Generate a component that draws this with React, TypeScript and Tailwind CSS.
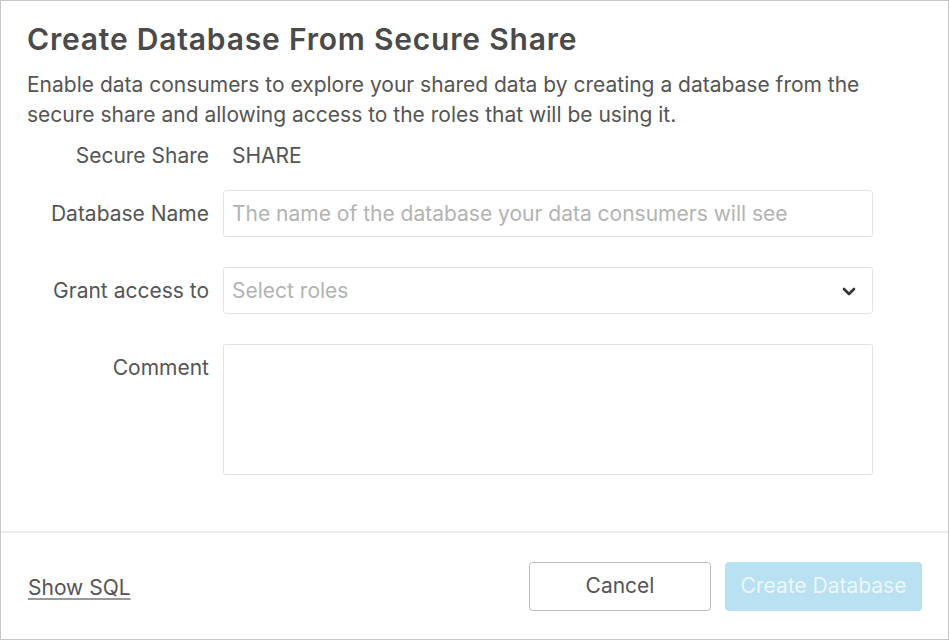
import React from 'react';

const labelCls = "text-right text-[21px] text-[#555]";
const fieldCls =
  "w-full rounded-[3px] border border-[#e3e3e3] bg-white px-[8px] text-[21px] text-[#444] placeholder:text-[#b3b3b3] outline-none";

export default function App() {
  return (
    <div
      className="flex h-[640px] w-[949px] flex-col border border-[#c8c8c8] bg-white"
      style={{ fontFamily: 'Inter, "Noto Sans", sans-serif' }}
    >
      {/* header */}
      <div className="px-[26px] pt-[20px]">
        <h1 className="text-[30px] font-semibold leading-[36px] tracking-[0.8px] text-[#4a4a4a]">
          Create Database From Secure Share
        </h1>
        <p className="mt-[13px] text-[21px] leading-[30px] text-[#555]">
          Enable data consumers to explore your shared data by creating a database from the
          <br />
          secure share and allowing access to the roles that will be using it.
        </p>
      </div>

      {/* form */}
      <div className="mt-[11px] grid grid-cols-[182px_650px] items-center gap-x-[14px] px-[26px]">
        <div className={labelCls + " leading-[30px]"}>Secure Share</div>
        <div className="pl-[9px] text-[21px] leading-[30px] text-[#555]">SHARE</div>

        <div className={labelCls + " mt-[19px]"}>Database Name</div>
        <input
          className={fieldCls + " mt-[19px] h-[47px]"}
          placeholder="The name of the database your data consumers will see"
        />

        <div className={labelCls + " mt-[30px]"}>Grant access to</div>
        <div className={fieldCls + " mt-[30px] flex h-[47px] items-center justify-between"}>
          <span className="text-[#b3b3b3]">Select roles</span>
          <svg width="16" height="16" viewBox="0 0 16 16" className="mr-[7px]">
            <path d="M3 6l5 5 5-5" fill="none" stroke="#333" strokeWidth="2.6" strokeLinecap="round" strokeLinejoin="round" />
          </svg>
        </div>

        <div className={labelCls + " mt-[30px] self-start pt-[8px]"}>Comment</div>
        <textarea className={fieldCls + " mt-[30px] h-[131px] resize-none py-[8px]"} />
      </div>

      <div className="flex-1" />

      {/* footer */}
      <div className="border-t-2 border-[#ececec]">
        <div className="flex h-[106px] items-center justify-between pl-[27px] pr-[26px]">
          <a href="#" className="mt-[3px] text-[21px] text-[#555] underline decoration-[#999] decoration-2 underline-offset-[3px]">
            Show SQL
          </a>
          <div className="flex items-center gap-[14px]">
            <button className="h-[49px] w-[182px] rounded-[4px] border border-[#bdbdbd] bg-white text-[21px] text-[#555]">
              Cancel
            </button>
            <button className="h-[49px] w-[197px] rounded-[4px] bg-[#b9e1f2] text-[21px] text-[#eaf6fb]">
              Create Database
            </button>
          </div>
        </div>
      </div>
    </div>
  );
}
